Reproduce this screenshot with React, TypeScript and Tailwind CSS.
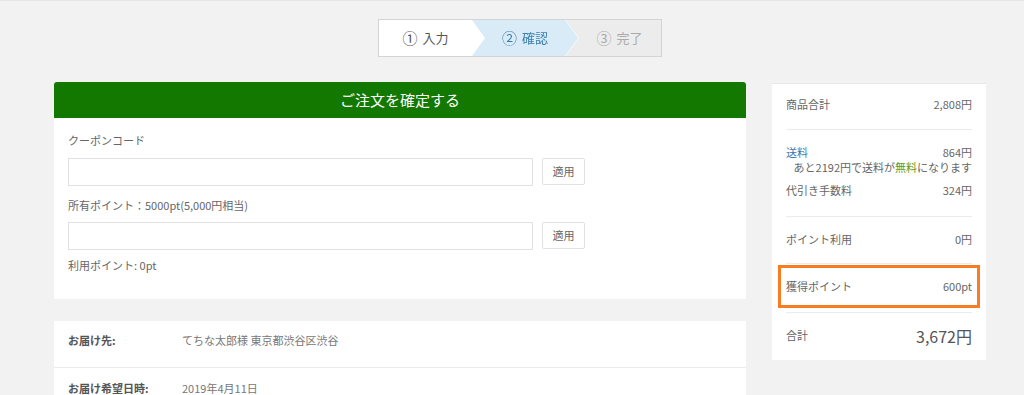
import React from "react";

const font = { fontFamily: '"Noto Sans CJK JP", "Noto Sans", sans-serif' };

const Stepper: React.FC = () => {
  return (
    <div className="flex justify-center pt-[18px]">
      <div className="ml-[16px] flex h-[38px] w-[284px] border border-[#d4d4d4] bg-[#ececec] text-[13px]">
        <div className="relative z-20 flex w-[106px] items-center justify-center gap-[5px] bg-white pr-[13px] text-[#555] [clip-path:polygon(0_0,calc(100%_-_13px)_0,100%_50%,calc(100%_-_13px)_100%,0_100%)]">
          <span className="text-[15px]">①</span>
          <span>入力</span>
        </div>
        <div className="relative z-10 -ml-[13px] [filter:drop-shadow(1px_0_0_#f4f9fc)]">
          <div className="flex h-full w-[106px] items-center justify-center gap-[5px] bg-[#d8ebf6] pl-[13px] pr-[13px] text-[#3b7fae] [clip-path:polygon(0_0,calc(100%_-_13px)_0,100%_50%,calc(100%_-_13px)_100%,0_100%)]">
            <span className="text-[15px]">②</span>
            <span>確認</span>
          </div>
        </div>
        <div className="-ml-[13px] flex flex-1 items-center justify-center gap-[5px] pl-[13px] text-[#aaa]">
          <span className="text-[15px]">③</span>
          <span>完了</span>
        </div>
      </div>
    </div>
  );
};

const SummaryRow: React.FC<{ label: React.ReactNode; value: string }> = ({
  label,
  value,
}) => (
  <div className="flex justify-between leading-[15px]">
    <span>{label}</span>
    <span>{value}</span>
  </div>
);

export default function App() {
  return (
    <div
      style={font}
      className="h-[395px] overflow-hidden border-t border-[#e6e6e6] bg-[#f2f2f2] text-[11px] text-[#666]"
    >
      <Stepper />

      <div className="flex gap-[26px] pl-[54px] pt-[25px]">
        {/* main column */}
        <div className="w-[692px]">
          <button className="flex h-[36px] w-full items-center justify-center rounded-t-[3px] bg-[#137800] text-[15px] text-white">
            ご注文を確定する
          </button>

          <div className="bg-white px-[14px] pb-[26px] pt-[15px]">
            <div className="leading-[15px]">クーポンコード</div>
            <div className="mt-[10px] flex gap-[9px]">
              <div className="h-[28px] w-[465px] border border-[#e2e2e2] bg-white" />
              <button className="h-[27px] w-[43px] rounded-[2px] border border-[#e2e2e2] bg-white text-[11px] text-[#666]">
                適用
              </button>
            </div>
            <div className="mt-[12px] leading-[15px]">
              所有ポイント：5000pt(5,000円相当)
            </div>
            <div className="mt-[9px] flex gap-[9px]">
              <div className="h-[28px] w-[465px] border border-[#e2e2e2] bg-white" />
              <button className="h-[27px] w-[43px] rounded-[2px] border border-[#e2e2e2] bg-white text-[11px] text-[#666]">
                適用
              </button>
            </div>
            <div className="mt-[8px] leading-[15px]">利用ポイント: 0pt</div>
          </div>

          <div className="mt-[22px] bg-white">
            <div className="flex h-[47px] items-start border-b border-[#ececec] px-[14px] pt-[11px]">
              <span className="w-[114px] font-bold text-[#555]">お届け先:</span>
              <span className="text-[#777]">てちな太郎様 東京都渋谷区渋谷</span>
            </div>
            <div className="flex h-[47px] items-start px-[14px] pt-[12px]">
              <span className="w-[114px] font-bold text-[#555]">お届け希望日時:</span>
              <span className="text-[#777]">2019年4月11日</span>
            </div>
          </div>
        </div>

        {/* summary */}
        <div className="mt-[1px] h-[277px] w-[214px] border-t border-[#e8e8e8] bg-white px-[14px]">
          <div className="border-b border-[#ececec] pb-[17px] pt-[13px]">
            <SummaryRow label="商品合計" value="2,808円" />
          </div>
          <div className="border-b border-[#ececec] pb-[18px] pt-[15px]">
            <SummaryRow
              label={<span className="text-[#3a78b5]">送料</span>}
              value="864円"
            />
            <div className="text-right leading-[15px]">
              あと2192円で送料が<span className="text-[#5e9a16]">無料</span>
              になります
            </div>
            <div className="mt-[8px]">
              <SummaryRow label="代引き手数料" value="324円" />
            </div>
          </div>
          <div className="border-b border-[#ececec] pb-[16px] pt-[15px]">
            <SummaryRow label="ポイント利用" value="0円" />
          </div>
          <div className="-mx-[8px] mt-[1px] flex h-[43px] items-center justify-between border-[3px] border-[#f87d20] px-[5px]">
            <span>獲得ポイント</span>
            <span>600pt</span>
          </div>
          <div className="mt-[4px] flex h-[46px] items-center justify-between border-t border-[#ececec]">
            <span>合計</span>
            <span className="text-[16px] text-[#555]">3,672円</span>
          </div>
        </div>
      </div>
    </div>
  );
}
